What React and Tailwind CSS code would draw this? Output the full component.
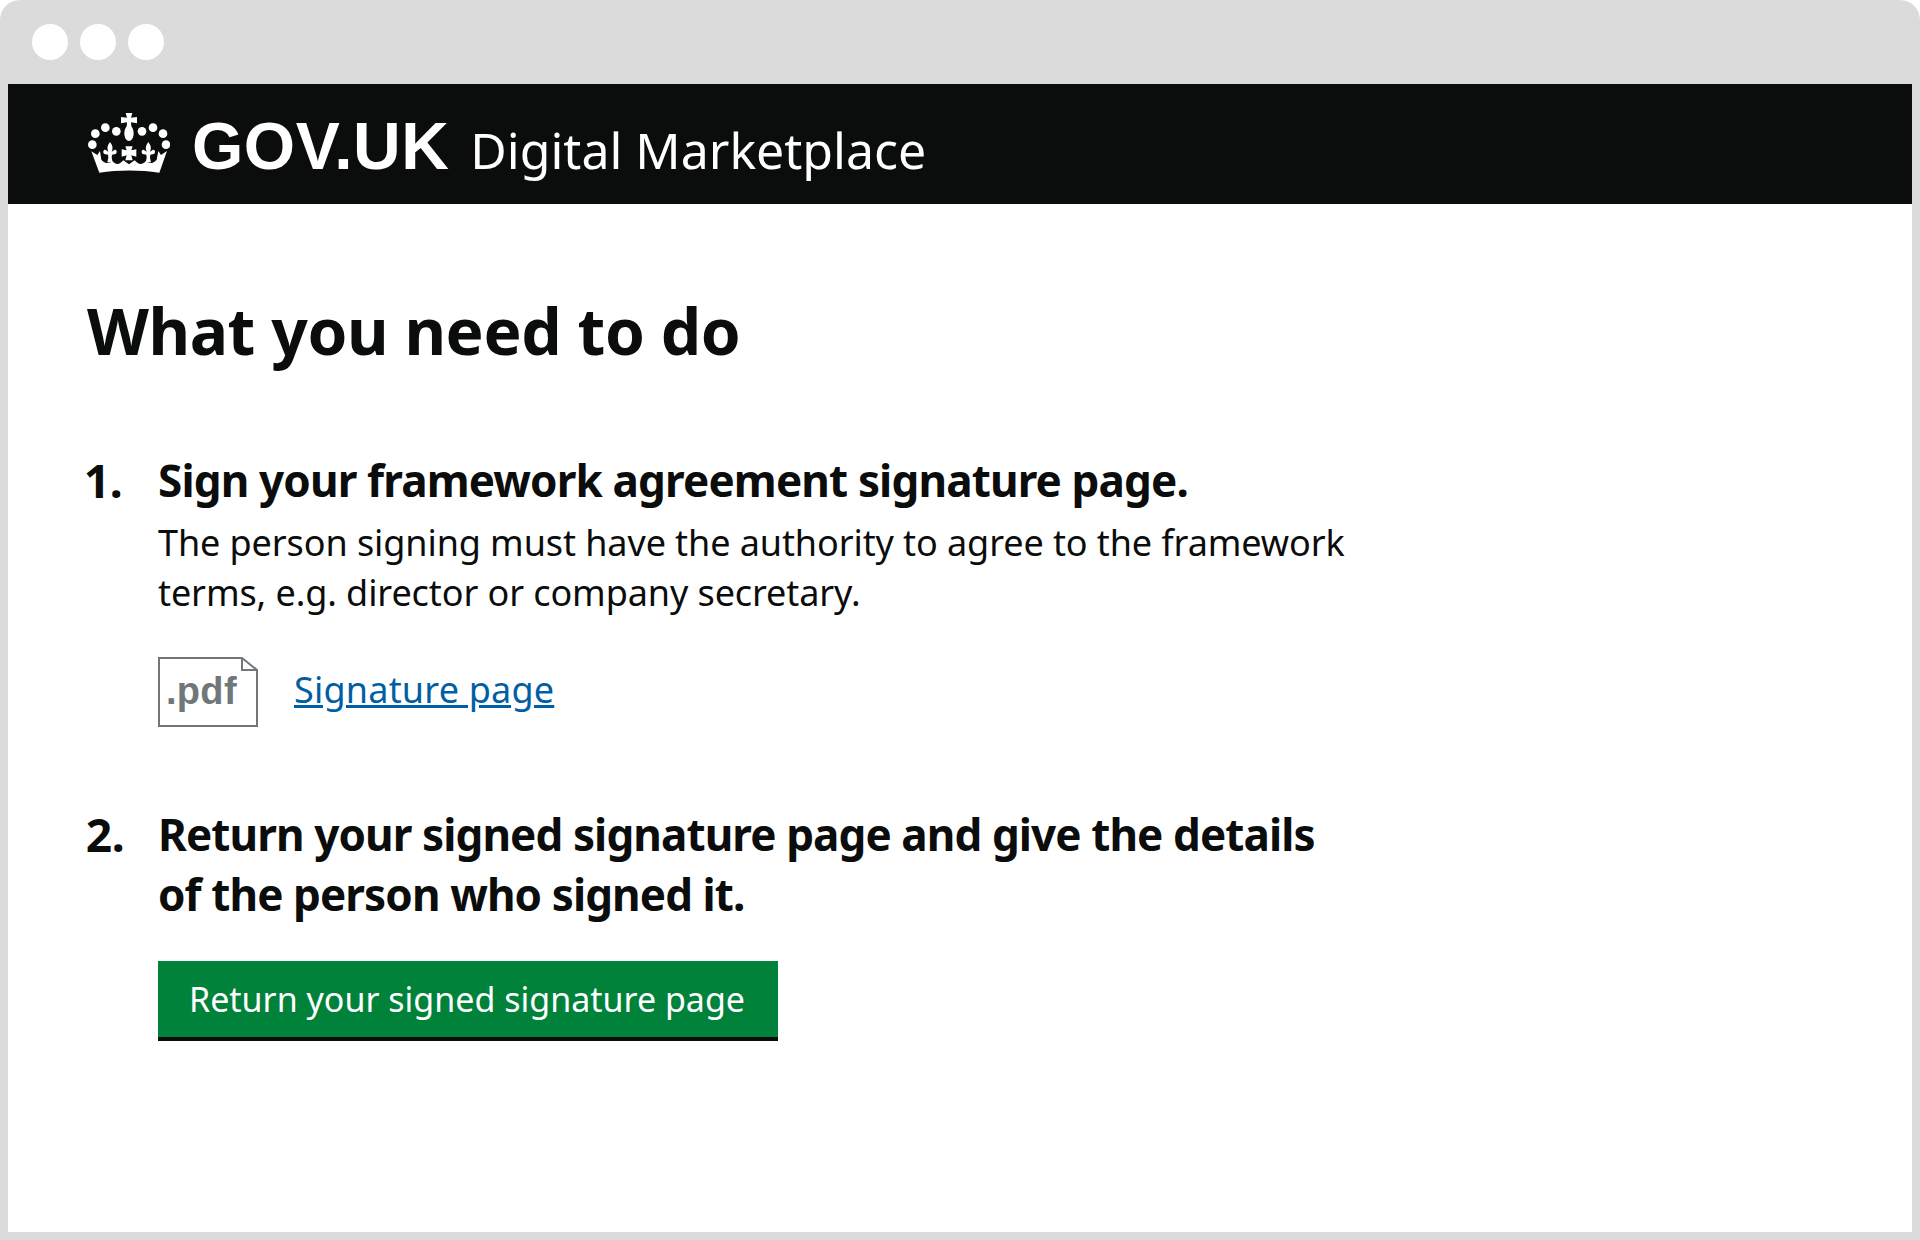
const sans = "font-['Noto_Sans',sans-serif]";

function Crown() {
  const dots = [[97,161],[106,128],[136,110],[169,121],[246,121],[279,110],[309,128],[318,161]];
  const fleur = "M0 153 C8 163 10 172 5 182 L14 176 C21 176 22 184 17 189 L6 191 L5 200 L8 214 L-8 214 L-5 200 L-6 191 L-17 189 C-22 184 -21 176 -14 176 L-5 182 C-10 172 -8 163 0 153 Z";
  return (
    <svg viewBox="84 66 246 180" className="w-[82px] h-[60px] shrink-0 -mt-[2px]" fill="#fff" aria-hidden="true">
      {dots.map(([x, y]) => <circle key={x} cx={x} cy={y} r="13" />)}
      <path d="M197 66 L217 66 L213 80 L231 78 L231 97 L213 94 L214 106 C226 120 222 150 207 150 C192 150 188 120 200 106 L201 94 L183 97 L183 78 L201 80 Z" />
      <path d="M196 166 L218 166 L214 178 L229 175 L229 197 L214 193 L218 208 L196 208 L200 193 L185 197 L185 175 L200 178 Z" />
      <path transform="translate(150 0)" d={fleur} />
      <path transform="translate(265 0)" d={fleur} />
      <path d="M94 181 L112 192 L120 180 L124 206 C134 218 146 219 158 211 C168 222 178 222 190 208 L207 220 L224 208 C236 222 246 222 257 211 C268 219 280 218 290 206 L295 180 L303 192 L321 180 L298 245 C240 236 175 236 118 245 Z" />
    </svg>
  );
}

function PdfIcon() {
  return (
    <svg viewBox="0 0 100 70" className="w-[100px] h-[70px] shrink-0" aria-hidden="true">
      <path d="M1 1 H84 L99 13 V69 H1 Z" fill="#fff" stroke="#6f777b" strokeWidth="2" />
      <path d="M84 1 V13 H99" fill="none" stroke="#6f777b" strokeWidth="2" />
      <text x="8" y="47" fontFamily="'Liberation Sans', sans-serif" fontWeight="700" fontSize="38" letterSpacing="0.3" fill="#6f777b">.pdf</text>
    </svg>
  );
}

export default function App() {
  return (
    <div className={`w-[1920px] h-[1240px] bg-white ${sans}`}>
      <div className="h-full bg-[#dbdbdb] rounded-t-[20px] px-2 pb-2 flex flex-col">
        <div className="h-[84px] shrink-0 flex items-start gap-3 pt-6 pl-6">
          <span className="size-9 rounded-full bg-white" />
          <span className="size-9 rounded-full bg-white" />
          <span className="size-9 rounded-full bg-white" />
        </div>
        <header className="h-[120px] shrink-0 bg-[#0b0c0c] flex items-center pl-20 text-white">
          <Crown />
          <span className="ml-[22px] mt-[3px] font-['Liberation_Sans',sans-serif] font-bold text-[66px] leading-none tracking-[0.5px]">GOV.UK</span>
          <span className="ml-[21px] mt-[12px] text-[50px] leading-none">Digital Marketplace</span>
        </header>
        <main className="flex-1 bg-white pl-20 pt-[87px] text-[#0b0c0c]">
          <h1 className="-ml-px text-[64px] leading-[80px] font-bold tracking-[-0.4px]">What you need to do</h1>
          <div className="mt-[79px] flex">
            <span className="w-[70px] -ml-[2px] mr-[2px] text-[46px] leading-[60px] font-bold proportional-nums">1.</span>
            <div>
              <h2 className="text-[44px] leading-[60px] font-bold tracking-[-0.85px]">Sign your framework agreement signature page.</h2>
              <p className="mt-[8px] w-[1200px] text-[36px] leading-[50px] tracking-[-0.09px]">The person signing must have the authority to agree to the framework terms, e.g. director or company secretary.</p>
              <div className="mt-[39px] flex items-center gap-9">
                <PdfIcon />
                <a href="#" className="-mt-[5px] text-[36px] leading-[50px] tracking-[0.2px] text-[#005ea5] underline">Signature page</a>
              </div>
            </div>
          </div>
          <div className="mt-[77px] flex">
            <span className="w-[70px] -ml-[2px] mr-[2px] text-[46px] leading-[60px] font-bold proportional-nums">2.</span>
            <div>
              <h2 className="w-[1200px] text-[44px] leading-[60px] font-bold tracking-[-0.9px]">Return your signed signature page and give the details of the person who signed it.</h2>
              <button className="mt-[37px] w-[620px] h-20 pr-[2px] bg-[#00823b] border-b-4 border-[#0b0c0c] text-white text-[34px] text-center">Return your signed signature page</button>
            </div>
          </div>
        </main>
      </div>
    </div>
  );
}
